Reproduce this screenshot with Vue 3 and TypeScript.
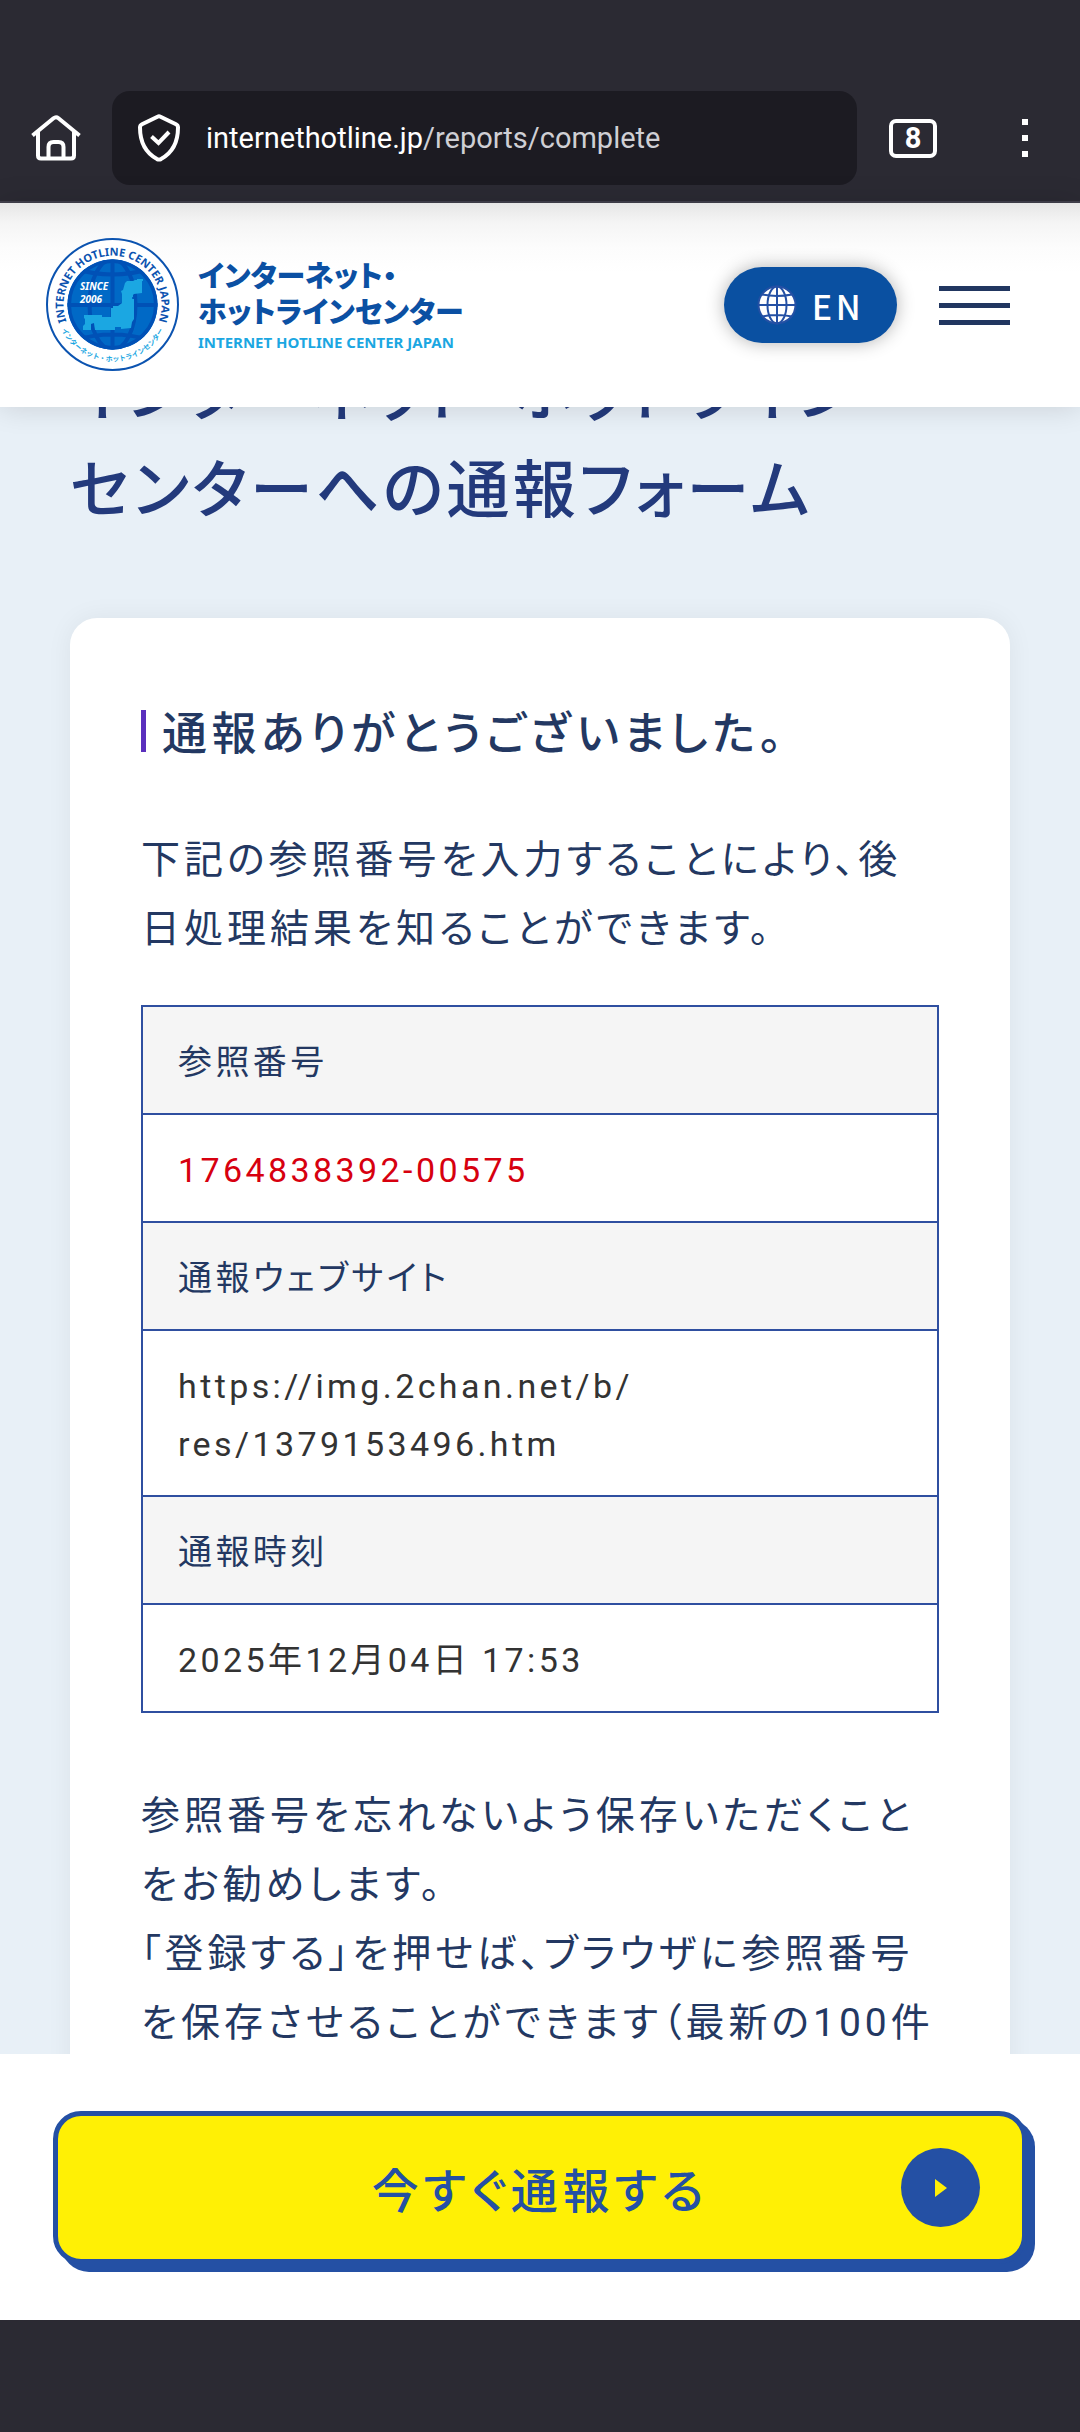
<script setup lang="ts">
interface ReportRow {
  label: string
  // Each part may be followed by a line break when space runs out.
  parts: string[]
  highlight?: boolean
}

const rows: ReportRow[] = [
  { label: '参照番号', parts: ['1764838392-00575'], highlight: true },
  { label: '通報ウェブサイト', parts: ['https://img.2chan.net/b/', 'res/1379153496.htm'] },
  { label: '通報時刻', parts: ['2025年12月04日 17:53'] },
]

const openTabs = 8
</script>

<template>
  <div class="screen">
    <div class="toolbar">
      <button class="icon-button" type="button" aria-label="ホーム">
        <svg width="50" height="46" viewBox="0 0 50 46" fill="none" stroke="#fff" stroke-width="4">
          <path d="M1.500 20.500 22.500 3.200q2.500-2 5 0L48.500 20.500" />
          <path d="M7 17v23.500q0 3 3 3h30q3 0 3-3V17" />
          <path d="M17.500 43V32q0-5 5-5h5q5 0 5 5v11" />
        </svg>
      </button>
      <button class="address" type="button">
        <svg width="42" height="48" viewBox="0 0 42 48" fill="none" stroke="#fff" stroke-width="4" stroke-linejoin="round">
          <path d="M19.500 2.700 4 10.300q-2 1-2 3.300c0 14 5 25 17 31.500q2 1 4 0c12-6.500 17-17.500 17-31.500q0-2.300-2-3.300L22.500 2.700q-1.500-.7-3 0z" />
          <path d="m13.500 22.500 7 6.500L31 18" stroke-linejoin="miter" />
        </svg>
        <span class="url"><span class="host">internethotline.jp</span>/reports/complete</span>
      </button>
      <button class="tabs" type="button" aria-label="タブ">{{ openTabs }}</button>
      <button class="icon-button menu-dots" type="button" aria-label="メニュー">
        <span></span><span></span><span></span>
      </button>
    </div>

    <header class="site-header">
      <a class="brand" href="#">
        <svg class="emblem" width="134" height="134" viewBox="0 0 134 134">
          <defs>
            <path id="arc-top" d="M26.500 95A49 49 0 1 1 106.500 95" />
            <path id="arc-bottom" d="M9.500 66.500A57 57 0 0 0 123.500 66.500" />
            <clipPath id="disc"><circle cx="66.500" cy="66.500" r="45" /></clipPath>
          </defs>
          <circle cx="66.500" cy="66.500" r="65.500" fill="#fff" stroke="#0b53b0" stroke-width="2" />
          <circle cx="66.500" cy="66.500" r="45" fill="#0069c6" />
          <g clip-path="url(#disc)" fill="none" stroke="#0051b6" stroke-width="4">
            <circle cx="66.500" cy="66.500" r="43.500" />
            <ellipse cx="66.500" cy="66.500" rx="23" ry="45" />
            <path d="M66.500 21v91M21 67h91M29 31q37.500 11 75 0M29 102q37.500-11 75 0" />
          </g>
          <path
            fill="#1ba7e2"
            d="M79 45l1-1 1-1h6l2-1h2v-1h6v2h-1v12l-8 1-1 1v2h-1v2h2v20l-2 3-1 6-10 1v-2h-6v3H49l-1-7-3 1v6h-8v-4l2-2v-5l-1-1v-3h18v2h9v-9h2v-2h5l4-3v-9l-1-3 2-1z"
          />
          <g class="since">
            <text x="34" y="52">SINCE</text>
            <text x="34" y="65">2006</text>
          </g>
          <text class="ring-en" text-anchor="middle">
            <textPath href="#arc-top" startOffset="50%">INTERNET HOTLINE CENTER JAPAN</textPath>
          </text>
          <text class="ring-ja" text-anchor="middle">
            <textPath href="#arc-bottom" startOffset="50%">インターネット・ホットラインセンター</textPath>
          </text>
        </svg>
        <span class="brand-text">
          <span class="brand-ja">インターネット・<br />ホットラインセンター</span>
          <span class="brand-en">INTERNET HOTLINE CENTER JAPAN</span>
        </span>
      </a>
      <a class="lang" href="#">
        <svg width="40" height="40" viewBox="0 0 40 40">
          <circle cx="20" cy="20" r="18.500" fill="#fff" stroke="#2450a4" stroke-width="2" />
          <g fill="none" stroke="#2450a4" stroke-width="2">
            <ellipse cx="20" cy="20" rx="9.500" ry="18.500" />
            <path d="M20 2v36M5 9.500q15 3 30 0M5 31.500q15-3 30 0" />
            <path d="M2 20h36" />
          </g>
        </svg>
        <span>EN</span>
      </a>
      <button class="hamburger" type="button" aria-label="メニュー">
        <span></span><span></span><span></span>
      </button>
    </header>

    <main class="content">
      <h1>インターネット・ホットライン<br />センターへの通報フォーム</h1>
      <section class="card">
        <h2>通報ありがとうございました。</h2>
        <p>下記の参照番号を入力することにより、後日処理結果を知ることができます。</p>
        <table>
          <tbody>
            <template v-for="row in rows" :key="row.label">
              <tr>
                <th scope="row">{{ row.label }}</th>
              </tr>
              <tr>
                <td :class="{ highlight: row.highlight }">
                  <template v-for="part in row.parts" :key="part">{{ part }}<wbr /></template>
                </td>
              </tr>
            </template>
          </tbody>
        </table>
        <p>
          参照番号を忘れないよう保存いただくことをお勧めします。<br />「登録する」を押せば、ブラウザに参照番号を保存させることができます（最新の100件
        </p>
      </section>
    </main>

    <div class="cta-bar">
      <a class="cta" href="#">
        <span>今すぐ通報する</span>
        <span class="cta-arrow">
          <svg width="12" height="18" viewBox="0 0 12 18"><path d="M0 0 12 9 0 18z" fill="#fff005" /></svg>
        </span>
      </a>
    </div>
    <div class="system-bar"></div>
  </div>
</template>

<style>
body {
  margin: 0;
}
</style>

<style scoped>
.screen {
  display: flex;
  flex-direction: column;
  height: 100vh;
  overflow: hidden;
  background: #e8f0f7;
  color: #233862;
  font-family: Roboto, "Noto Sans CJK JP", sans-serif;
  font-feature-settings: "palt";
}

button {
  padding: 0;
  border: 0;
  background: none;
  font: inherit;
  color: inherit;
}

a {
  color: inherit;
  text-decoration: none;
}

.toolbar {
  display: flex;
  align-items: center;
  flex: none;
  padding: 91px 52px 16px 31px;
  border-bottom: 2px solid #42414d;
  background: #2b2a33;
  color: #fff;
}

.icon-button {
  display: flex;
}

.address {
  display: flex;
  flex: 1;
  align-items: center;
  gap: 26px;
  height: 94px;
  margin: 0 32px 0 31px;
  padding: 0 26px;
  border-radius: 18px;
  background: #1c1b22;
  text-align: left;
}

.url {
  color: #cfcfd4;
  font-size: 29px;
}

.host {
  color: #fff;
}

.tabs {
  width: 48px;
  height: 39px;
  border: 4px solid #fff;
  border-radius: 7px;
  font-size: 29px;
  font-weight: 700;
  line-height: 31px;
  text-align: center;
}

.menu-dots {
  flex-direction: column;
  gap: 10px;
  margin-left: 85px;
}

.menu-dots span {
  width: 6px;
  height: 6px;
  background: #fff;
}

.site-header {
  position: relative;
  display: flex;
  align-items: center;
  flex: none;
  padding: 35px 70px 35px 46px;
  background: linear-gradient(#e6e6e6, #f5f5f5 20px, #fcfcfc 45px, #fff 70px);
  box-shadow: 0 0 28px rgba(0, 0, 0, 0.14);
}

.brand {
  display: flex;
  align-items: center;
  gap: 18px;
  margin-right: auto;
}

.emblem {
  display: block;
}

.since {
  fill: #fff;
  font: italic 700 10px "Noto Sans", sans-serif;
}

.ring-en {
  fill: #0b53b0;
  font: 700 11px "Noto Sans", sans-serif;
}

.ring-ja {
  fill: #1ba7e2;
  font: 700 7px "Noto Sans CJK JP", sans-serif;
}

.brand-text {
  display: flex;
  flex-direction: column;
  gap: 2px;
}

.brand-ja {
  color: #0b50a3;
  font-family: "Noto Sans CJK JP", sans-serif;
  font-size: 29px;
  font-weight: 900;
  line-height: 36px;
}

.brand-en {
  color: #1ba7e2;
  font-family: "Noto Sans", sans-serif;
  font-size: 15px;
  font-weight: 700;
  line-height: 24px;
}

.lang {
  display: flex;
  align-items: center;
  gap: 15px;
  box-sizing: border-box;
  height: 76px;
  padding: 0 33px;
  border-radius: 38px;
  background: #0a50a1;
  box-shadow: 0 0 18px rgba(0, 0, 0, 0.3);
  color: #fff;
  font-family: "Noto Sans CJK JP", sans-serif;
  font-size: 34px;
  font-weight: 500;
  letter-spacing: 0.1em;
}

.hamburger {
  display: flex;
  flex-direction: column;
  gap: 12px;
  margin-left: 42px;
}

.hamburger span {
  width: 71px;
  height: 5px;
  background: #213660;
}

.content {
  flex: 1;
  min-height: 0;
  padding: 0 70px;
  overflow: hidden;
}

h1 {
  margin: -62px 0 79px;
  color: #233a7c;
  font-size: 63px;
  font-weight: 500;
  letter-spacing: 0.05em;
  line-height: 97px;
}

.card {
  padding: 92px 71px 71px;
  border-radius: 27px;
  background: #fff;
  box-shadow: 0 0 27px rgba(0, 0, 0, 0.06);
}

h2 {
  display: flex;
  gap: 16px;
  margin: 0 0 66px;
  font-size: 45px;
  font-weight: 500;
  letter-spacing: 0.1em;
  line-height: 50px;
}

h2::before {
  width: 5px;
  height: 42px;
  background: #5a2fbd;
  content: "";
}

p {
  margin: 0;
  font-size: 39px;
  letter-spacing: 4px;
  line-height: 69px;
}

table {
  width: 100%;
  margin: 41px 0 69px;
  border-collapse: collapse;
  table-layout: fixed;
  font-size: 34px;
  letter-spacing: 0.1em;
  line-height: 58px;
}

th,
td {
  padding: 26px 35px 22px;
  border: 2px solid #2f4fa0;
  font-weight: 400;
  text-align: left;
}

th {
  background: #f5f5f5;
}

td {
  color: #333;
}

.highlight {
  color: #d7000f;
}

.cta-bar {
  flex: none;
  padding: 57px 53px 56px;
  background: #fff;
}

.cta {
  position: relative;
  display: flex;
  align-items: center;
  justify-content: center;
  box-sizing: border-box;
  height: 153px;
  border: 5px solid #2450a4;
  border-radius: 28px;
  background: #fff005;
  box-shadow: 8px 8px 0 #2450a4;
  color: #2450a4;
  font-size: 47px;
  font-weight: 500;
  letter-spacing: 0.1em;
}

.cta-arrow {
  position: absolute;
  right: 42px;
  display: flex;
  align-items: center;
  justify-content: center;
  width: 79px;
  height: 79px;
  border-radius: 50%;
  background: #2450a4;
}

.system-bar {
  flex: none;
  height: 112px;
  background: #2b2a33;
}
</style>
